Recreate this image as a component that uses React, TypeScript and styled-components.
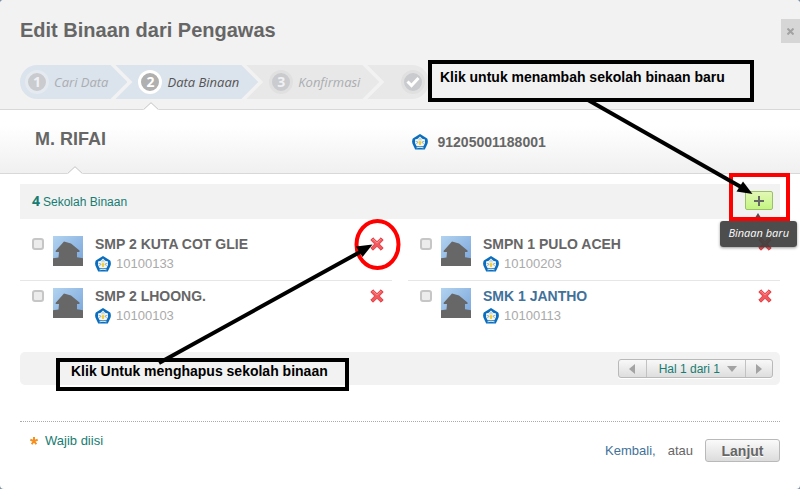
import React from "react";
import styled, { createGlobalStyle, css } from "styled-components";

const GlobalStyle = createGlobalStyle`
  *, *::before, *::after { box-sizing: border-box; }
  body { margin: 0; background: #7d92a8; }
  body, button, input { font-family: "Liberation Sans", Arial, sans-serif; font-size: 13px; line-height: 16px; }
  button { padding: 0; border: 0; background: none; cursor: pointer; }
  h1, h2, h3, p, ul, ol { margin: 0; padding: 0; list-style: none; }
  a { text-decoration: none; }
`;

const Dialog = styled.main`
  position: relative;
  min-height: 100vh;
  background: #fff;
  border-radius: 4px;
  overflow: hidden;
  color: #666;
`;

const Header = styled.header`
  position: relative;
  padding: 18px 20px 10px;
  background: #f2f2f2;
  border-bottom: 1px solid #d8d8d8;
`;

const Title = styled.h1`
  font-size: 20px;
  line-height: 24px;
  margin-bottom: 23px;
`;

const CloseButton = styled.button`
  position: absolute;
  top: 19px;
  right: 0;
  width: 19px;
  height: 24px;
  display: grid;
  place-items: center;
  background: #d6d6d6;
`;

const Steps = styled.ol`
  display: flex;
  height: 34px;
`;

const stepShape = {
  first: "polygon(0 0, calc(100% - 17px) 0, 100% 50%, calc(100% - 17px) 100%, 0 100%)",
  middle: "polygon(0 0, calc(100% - 17px) 0, 100% 50%, calc(100% - 17px) 100%, 0 100%, 17px 50%)",
  last: "polygon(0 0, 100% 0, 100% 100%, 0 100%, 17px 50%)",
};

const Step = styled.li<{ $shape: keyof typeof stepShape; $tone: "blue" | "grey"; $current?: boolean }>`
  display: flex;
  align-items: center;
  gap: 5px;
  padding: 0 19px 0 5px;
  clip-path: ${(p) => stepShape[p.$shape]};
  background: ${(p) => (p.$tone === "blue" ? "#dbe3ec" : "#e8e8e8")};
  color: ${(p) => (p.$current ? "#555" : "#aaadb1")};
  font: italic 13px/18px "Open Sans", sans-serif;
  white-space: nowrap;
  ${(p) => p.$shape === "first" && css`border-radius: 17px 0 0 17px;`}
  ${(p) => p.$shape !== "first" && css`margin-left: -12px; padding-left: 23px;`}
  ${(p) => p.$shape === "last" && css`border-radius: 0 17px 17px 0; padding: 0 4px 0 34px;`}
`;

const StepBadge = styled.span<{ $current?: boolean; $tone: "blue" | "grey" }>`
  display: grid;
  place-items: center;
  width: 24px;
  height: 24px;
  border-radius: 50%;
  border: 3px solid ${(p) => (p.$current ? "#fff" : p.$tone === "blue" ? "#e5eaf1" : "#e0e0e0")};
  background: ${(p) => (p.$current ? "#b0b0b0" : "#cacbce")};
  color: ${(p) => (p.$current ? "#fff" : "#f0f1f4")};
  font: bold 14px/18px "Open Sans", sans-serif;
`;

const Notch = styled.svg<{ $left: number }>`
  position: absolute;
  left: ${(p) => p.$left}px;
  bottom: -1px;
  width: 16px;
  height: 8px;
`;

const Person = styled.section`
  position: relative;
  display: grid;
  grid-template-columns: 1fr 1fr;
  column-gap: 8px;
  align-items: center;
  padding: 0 20px 4px 35px;
  height: 64px;
  background: linear-gradient(#fff 25%, #f0f0f0);
  border-bottom: 1px solid #d8d8d8;
`;

const PersonName = styled.h2`
  font-size: 18px;
  line-height: 22px;
  padding-bottom: 2px;
`;

const PersonId = styled.p`
  display: flex;
  align-items: center;
  gap: 10px;
  font-weight: bold;
  font-size: 14px;
  padding-top: 4px;
`;

const Content = styled.div`
  padding: 10px 20px 0;
`;

const CountBar = styled.div`
  display: flex;
  align-items: center;
  justify-content: space-between;
  height: 35px;
  padding: 0 7px 0 12px;
  background: #f2f2f2;
  color: #177c72;
`;

const Count = styled.p`
  display: flex;
  align-items: baseline;
  gap: 3px;
  font-size: 12px;
  strong { font: bold 14px/16px "Open Sans", sans-serif; }
`;

const AddWrap = styled.div`
  position: relative;
  display: flex;
  margin-bottom: 2px;
`;

const AddButton = styled.button`
  width: 28px;
  height: 19px;
  display: grid;
  place-items: center;
  border: 1px solid #9cc068;
  border-radius: 2px;
  background: linear-gradient(#e2f8b6, #c4f580);
`;

const Tooltip = styled.div`
  position: absolute;
  z-index: 1;
  top: 30px;
  right: -24px;
  padding: 3px 8px 5px;
  border-radius: 3px;
  background: rgba(64, 64, 64, 0.93);
  box-shadow: 0 1px 3px rgba(0, 0, 0, 0.4);
  color: #fff;
  font: italic 11px/18px "Open Sans", sans-serif;
  white-space: nowrap;
  &::before {
    content: "";
    position: absolute;
    top: -8px;
    left: 33px;
    border: 5px solid transparent;
    border-top: 0;
    border-bottom: 8px solid #505050;
  }
`;

const AddHighlight = styled.div`
  position: absolute;
  z-index: 2;
  top: -18px;
  right: -17px;
  width: 61px;
  height: 48px;
  border: 4px solid #f00;
  pointer-events: none;
`;

const SchoolGrid = styled.ul`
  display: grid;
  grid-template-columns: 1fr 1fr;
  column-gap: 16px;
  padding-top: 9px;
`;

const SchoolRow = styled.li`
  display: flex;
  align-items: flex-start;
  height: 52px;
  padding: 8px 8px 0 12px;
  &:nth-child(n + 3) { border-top: 1px solid #e6e6e6; padding-top: 7px; }
`;

const Check = styled.input`
  appearance: none;
  width: 12px;
  height: 12px;
  margin: 2px 9px 0 0;
  border: 2px solid #c6c6c6;
  border-radius: 3px;
  background: #ececec;
  &:checked { background: #888; }
`;

const Info = styled.div`
  flex: 1;
  padding-left: 12px;
  h3 { font-size: 14px; line-height: 16px; margin-bottom: 4px; }
  p { display: flex; align-items: center; gap: 5px; color: #aaa; }
`;

const SchoolName = styled.a<{ $active?: boolean }>`
  color: ${(p) => (p.$active ? "#3f729b" : "#666")};
`;

const RemoveButton = styled.button`
  width: 14px;
  height: 14px;
  margin-top: 1px;
  display: block;
`;

const PagerBar = styled.div`
  display: flex;
  justify-content: flex-end;
  margin-top: 20px;
  padding: 7px;
  background: #f2f2f2;
  border-radius: 5px;
`;

const Pager = styled.nav`
  display: flex;
  height: 19px;
  border: 1px solid #b9b9b9;
  border-radius: 3px;
  background: linear-gradient(#f8f8f8, #dedede);
  box-shadow: 0 1px 0 #fff;
`;

const PagerButton = styled.button`
  display: flex;
  align-items: center;
  justify-content: center;
  gap: 7px;
  min-width: 27px;
  color: #177c72;
  font-size: 12px;
  & + & { border-left: 1px solid #c2c2c2; }
  &:nth-child(2) { padding: 0 8px 0 12px; }
`;

const Footer = styled.footer`
  display: flex;
  justify-content: space-between;
  margin-top: 36px;
  border-top: 1px dotted #aaa;
  padding: 11px 0 26px;
`;

const Required = styled.p`
  display: flex;
  gap: 7px;
  padding-left: 10px;
  color: #177c72;
`;

const Actions = styled.div`
  display: flex;
  align-items: center;
  gap: 12px;
  padding-top: 6px;
`;

const Back = styled.a`
  color: #3f729b;
`;

const NextButton = styled.button`
  width: 75px;
  height: 23px;
  border: 1px solid #b9b9b9;
  border-radius: 3px;
  background: linear-gradient(#fafafa, #dcdcdc);
  color: #666;
  font-size: 14px;
  font-weight: bold;
  text-shadow: 0 1px 0 #fff;
`;

const Callout = styled.p`
  position: absolute;
  z-index: 3;
  border: 4px solid #000;
  color: #000;
  font-size: 14px;
  font-weight: bold;
  white-space: nowrap;
`;

const AddCallout = styled(Callout)`
  top: 60px;
  right: 46px;
  width: 326px;
  height: 42px;
  padding: 5px 8px;
`;

const RemoveCallout = styled(Callout)`
  top: 358px;
  left: 56px;
  width: 293px;
  height: 33px;
  padding: 1px 11px;
`;

const Arrow = styled.svg`
  position: absolute;
  z-index: 4;
  pointer-events: none;
`;

const AddArrow = styled(Arrow)`
  top: 96px;
  right: 40px;
`;

const RemoveArrow = styled(Arrow)`
  top: 216px;
  left: 150px;
`;

function Emblem() {
  return (
    <svg width="16" height="16" viewBox="0 0 16 16" aria-hidden="true">
      <path d="M8 0 15.2 4.6Q16.4 7 15.4 10L12.8 15.6H3.200L.6 10Q-.4 7 .8 4.6Z" fill="#0b6dbd" />
      <path d="M8 2.600 10.200 4.800 13 5.600 13 9 11.400 12.200H4.600L3 9 3 5.600 5.800 4.800Z" fill="#f2f6f8" />
      <path d="M3.500 7.300 5.800 7.800 4.500 10M12.500 7.300 10.200 7.800 11.500 10M6.500 5.800 8 4.500 9.500 5.800" stroke="#85a9bd" strokeWidth=".8" fill="none" />
      <path d="M8 6 9.400 8.200 8.900 11H7.100L6.600 8.200Z" fill="#f0d03a" />
      <path d="M4.500 13.800Q8 12.800 11.500 13.800" stroke="#d5eaf6" fill="none" />
    </svg>
  );
}

function SchoolPicture() {
  return (
    <svg width="30" height="30" viewBox="0 0 30 30" aria-hidden="true">
      <defs>
        <linearGradient id="sky" x1="0" y1="0" x2="1" y2="1">
          <stop offset="0" stopColor="#b2d3f0" />
          <stop offset="1" stopColor="#78a4da" />
        </linearGradient>
      </defs>
      <path d="M0 0H30V30H0Z" fill="url(#sky)" />
      <path d="M0 22.300 5.500 21.500 6 16H2.700V14.800L11 5.500 18 7.500 26.500 14.500V16H24V21.200L30 22.300V30H0Z" fill="#676767" />
    </svg>
  );
}

function Cross() {
  return (
    <svg width="14" height="14" viewBox="0 0 14 14" aria-hidden="true">
      <path d="M3 .8 7 4.700 11 .8 13.200 3 9.300 7 13.200 11 11 13.200 7 9.300 3 13.200 .8 11 4.700 7 .8 3Z" fill="#f2585c" stroke="#da3c42" strokeLinejoin="round" />
      <path d="M2.500 2.800 3 2.200 7 6.200 11 2.200" stroke="#ff8f8d" fill="none" />
    </svg>
  );
}

function NotchMark({ left }: { left: number }) {
  return (
    <Notch $left={left} viewBox="0 0 16 8" aria-hidden="true">
      <path d="M0 8 8 .7 16 8Z" fill="#fff" />
      <path d="M.7 7.500 8 .7 15.300 7.500" fill="none" stroke="#c4c4c4" />
    </Notch>
  );
}

const schools = [
  { name: "SMP 2 KUTA COT GLIE", code: "10100133" },
  { name: "SMPN 1 PULO ACEH", code: "10100203" },
  { name: "SMP 2 LHOONG.", code: "10100103" },
  { name: "SMK 1 JANTHO", code: "10100113", active: true },
];

export default function App() {
  return (
    <>
      <GlobalStyle />
      <Dialog>
        <Header>
          <Title>Edit Binaan dari Pengawas</Title>
          <CloseButton aria-label="Tutup">
            <svg width="7" height="7" viewBox="0 0 7 7">
              <path d="M.5.5 6.500 6.500M6.500.5.5 6.500" stroke="#a2a2a2" strokeWidth="2" />
            </svg>
          </CloseButton>
          <Steps>
            <Step $shape="first" $tone="blue">
              <StepBadge $tone="blue">1</StepBadge>Cari Data
            </Step>
            <Step $shape="middle" $tone="blue" $current aria-current="step">
              <StepBadge $tone="blue" $current>2</StepBadge>Data Binaan
            </Step>
            <Step $shape="middle" $tone="grey">
              <StepBadge $tone="grey">3</StepBadge>Konfirmasi
            </Step>
            <Step $shape="last" $tone="grey">
              <StepBadge $tone="grey">
                <svg width="14" height="12" viewBox="0 0 14 12" aria-label="Selesai">
                  <path d="M1.500 5.500 5.500 9.500 12.500 2" fill="none" stroke="#fff" strokeWidth="3" />
                </svg>
              </StepBadge>
            </Step>
          </Steps>
          <NotchMark left={143} />
        </Header>

        <Person>
          <PersonName>M. RIFAI</PersonName>
          <PersonId><Emblem />91205001188001</PersonId>
          <NotchMark left={67} />
        </Person>

        <Content>
          <CountBar>
            <Count><strong>4</strong>Sekolah Binaan</Count>
            <AddWrap>
              <AddButton aria-label="Tambah binaan" aria-describedby="add-tip">
                <svg width="10" height="10" viewBox="0 0 10 10">
                  <path d="M5 0V10M0 5H10" stroke="#666" strokeWidth="2" />
                </svg>
              </AddButton>
              <Tooltip id="add-tip" role="tooltip">Binaan baru</Tooltip>
              <AddHighlight />
            </AddWrap>
          </CountBar>

          <SchoolGrid>
            {schools.map((s) => (
              <SchoolRow key={s.code}>
                <Check type="checkbox" aria-label={s.name} />
                <SchoolPicture />
                <Info>
                  <h3><SchoolName href="#" $active={s.active}>{s.name}</SchoolName></h3>
                  <p><Emblem />{s.code}</p>
                </Info>
                <RemoveButton aria-label={`Hapus ${s.name}`}><Cross /></RemoveButton>
              </SchoolRow>
            ))}
          </SchoolGrid>

          <PagerBar>
            <Pager aria-label="Halaman">
              <PagerButton aria-label="Sebelumnya">
                <svg width="6" height="10" viewBox="0 0 6 10"><path d="M6 0V10L0 5Z" fill="#a3a3a3" /></svg>
              </PagerButton>
              <PagerButton>
                Hal 1 dari 1
                <svg width="10" height="6" viewBox="0 0 10 6"><path d="M0 0H10L5 6Z" fill="#a3a3a3" /></svg>
              </PagerButton>
              <PagerButton aria-label="Berikutnya">
                <svg width="6" height="10" viewBox="0 0 6 10"><path d="M0 0V10L6 5Z" fill="#a3a3a3" /></svg>
              </PagerButton>
            </Pager>
          </PagerBar>

          <Footer>
            <Required>
              <svg width="8" height="16" viewBox="0 0 8 16" aria-hidden="true">
                <path d="M4 4V8L.3 6.800M4 8 7.700 6.800M4 8 1.700 11.300M4 8 6.300 11.300" stroke="#f78f1e" strokeWidth="2" fill="none" />
              </svg>
              Wajib diisi
            </Required>
            <Actions>
              <Back href="#">Kembali,</Back>
              <span>atau</span>
              <NextButton>Lanjut</NextButton>
            </Actions>
          </Footer>
        </Content>

        <AddCallout>Klik untuk menambah sekolah binaan baru</AddCallout>
        <AddArrow width="180" height="110" viewBox="0 0 180 110" aria-hidden="true">
          <path d="M8 4 161 91" stroke="#000" strokeWidth="4" />
          <path d="M172.500 98 156.500 95.500 163 85.500Z" fill="#000" />
        </AddArrow>
        <RemoveCallout>Klik Untuk menghapus sekolah binaan</RemoveCallout>
        <RemoveArrow width="260" height="155" viewBox="0 0 260 155" aria-hidden="true">
          <ellipse cx="227.500" cy="28.500" rx="21" ry="23.500" fill="none" stroke="#f00" strokeWidth="4" />
          <path d="M9 147 210 36" stroke="#000" strokeWidth="4" />
          <path d="M222.500 28.500 212.500 41 206 30.500Z" fill="#000" />
        </RemoveArrow>
      </Dialog>
    </>
  );
}
